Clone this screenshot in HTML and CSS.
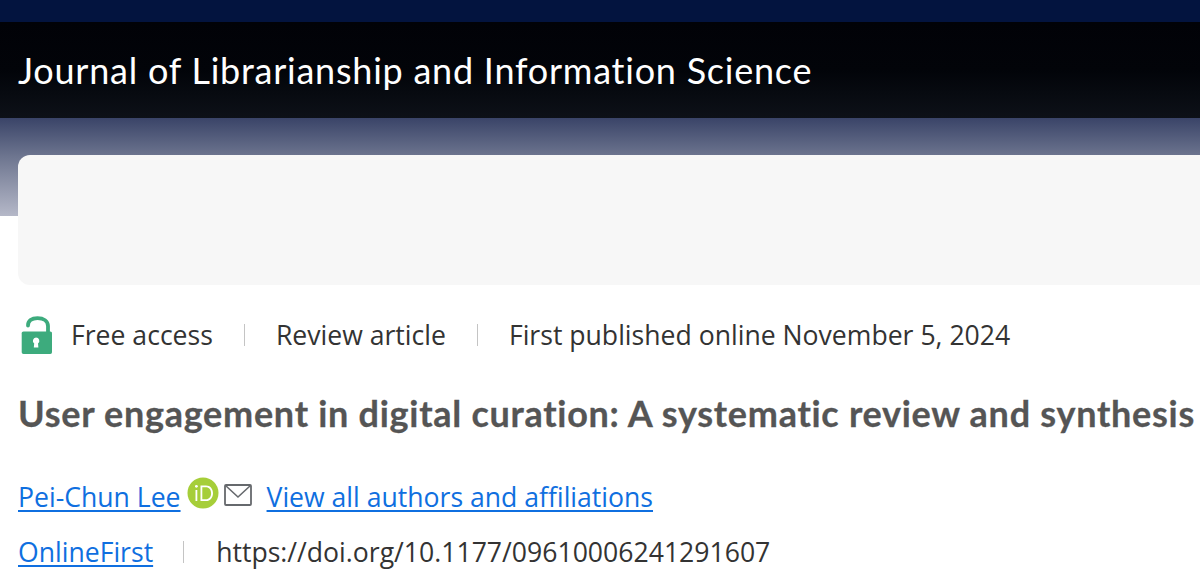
FILE: index.html
```html
<!DOCTYPE html>
<html>
  <head>
    <meta charset="utf-8">
    <title>User engagement in digital curation</title>
    <link rel="stylesheet" href="styles.css">
  </head>
  <body>
    <div class="top_bar"></div>
    <div class="journal_bar">
      <a class="journal_name">Journal of Librarianship and Information Science</a>
    </div>
    <div class="hero">
      <div class="ad_box"></div>
    </div>

    <div class="article">
      <div class="meta_row">
        <svg class="lock_icon" width="32" height="39" viewBox="0 0 32 39">
          <path d="M7 9.500C7 5 10.500 2.100 16.500 2.100S27 5 27 10V18" fill="none" stroke="#3dab7d" stroke-width="3.800" stroke-linecap="round"/>
          <path d="M2.500 15.500H29.300C30.400 15.500 31 16.200 31 17.300V36C31 37.200 30.400 37.900 29.300 37.900H2.500C1.400 37.900 .7 37.200 .7 36V17.300C.7 16.200 1.400 15.500 2.500 15.500Z" fill="#3dab7d"/>
          <path d="M15 21.500A3.400 3.400 0 0 1 17 27.600L17.400 31.500H12.800L13.200 27.600A3.400 3.400 0 0 1 15 21.500Z" fill="#fff"/>
        </svg>
        <span class="meta_item">Free access</span>
        <span class="meta_sep"></span>
        <span class="meta_item">Review article</span>
        <span class="meta_sep"></span>
        <span class="meta_item">First published online November 5, 2024</span>
      </div>

      <h1 class="article_title">User engagement in digital curation: A systematic review and synthesis</h1>

      <div class="author_row">
        <a class="link">Pei-Chun Lee</a>
        <svg class="orcid_icon" width="32" height="32" viewBox="0 0 32 32">
          <circle cx="16" cy="16" r="15.500" fill="#a6ce39"/>
          <rect x="8.500" y="13" width="1.800" height="11" fill="#fff"/>
          <circle cx="9.400" cy="9.300" r="1.400" fill="#fff"/>
          <path d="M13.500 8.500H19C23.500 8.500 26 12 26 16.200S23.500 24 19 24H13.500Z M15.300 10.200V22.300H18.800C22.200 22.300 24.100 19.600 24.100 16.200S22.200 10.200 18.800 10.200Z" fill="#fff" fill-rule="evenodd"/>
        </svg>
        <svg class="mail_icon" width="28" height="22" viewBox="0 0 28 22">
          <rect x="1" y="1" width="26" height="20" rx="1" fill="none" stroke="#66696d" stroke-width="1.800"/>
          <path d="M1.500 1.500L14 13L26.500 1.500" fill="none" stroke="#66696d" stroke-width="1.600"/>
        </svg>
        <a class="link all_authors">View all authors and affiliations</a>
      </div>

      <div class="doi_row">
        <a class="link">OnlineFirst</a>
        <span class="meta_sep doi_sep"></span>
        <span class="doi">https://doi.org/10.1177/09610006241291607</span>
      </div>
    </div>
  </body>
</html>
```

FILE: styles.css
```css
html, body{
  margin: 0;
  padding: 0;
  width: 100%;
  height: 100%;
  overflow: hidden;
  background-color: #FFFFFF;
  font-family: "Open Sans", sans-serif;
  color: #333333;
}
.top_bar{
  height: 22px;
  background-color: #03143F;
}
.journal_bar{
  height: 96px;
  padding-left: 18px;
  display: flex;
  align-items: center;
  background: linear-gradient(to bottom, #010207 0%, #020409 50%, #0D1118 100%);
}
.journal_name{
  font-family: "Lato", sans-serif;
  font-size: 36px;
  font-variant-ligatures: none;
  letter-spacing: .76px;
  color: #FFFFFF;
  white-space: nowrap;
}
.hero{
  height: 98px;
  background: linear-gradient(to bottom, #3A4468 0%, #6E7690 40%, #B5B8C8 100%);
  padding-top: 37px;
  padding-left: 18px;
  box-sizing: border-box;
}
.ad_box{
  height: 130px;
  background-color: #F7F7F7;
  border-radius: 12px 0 0 12px;
}
.article{
  padding-left: 18px;
  margin-top: 99px;
  white-space: nowrap;
  font-size: 26.6px;
}
.meta_row{
  display: flex;
  align-items: center;
  height: 40px;
}
.lock_icon{
  margin-left: 3px;
  margin-right: 18px;
}
.meta_sep{
  display: inline-block;
  width: 1px;
  height: 22px;
  margin: 0 31px;
  background-color: #C4C4C4;
}
.article_title{
  margin: 35px 0 0;
  font-family: "Lato", sans-serif;
  font-size: 36px;
  font-weight: 700;
  font-variant-ligatures: none;
  letter-spacing: .72px;
  line-height: 46px;
  color: #555555;
  -webkit-text-stroke: .3px #555555;
}
.author_row{
  display: flex;
  align-items: center;
  margin-top: 43px;
  height: 36px;
}
.link{
  color: #0F6FE0;
  text-decoration: underline;
  text-decoration-thickness: 2px;
  text-underline-offset: 3px;
}
.orcid_icon{
  margin-left: 6px;
  margin-top: -9px;
}
.mail_icon{
  margin-left: 5px;
  margin-top: -5px;
}
.all_authors{
  margin-left: 15px;
}
.doi_row{
  display: flex;
  align-items: center;
  margin-top: 19px;
  height: 36px;
}
.doi_sep{
  margin: 0 32px 0 30px;
}
```
